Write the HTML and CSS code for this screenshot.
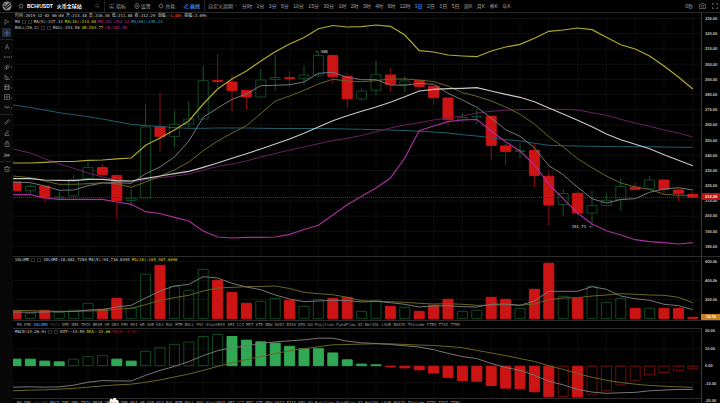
FILE: index.html
```html
<!DOCTYPE html>
<html lang="zh-CN">
<head>
    <meta charset="UTF-8">
    <meta name="viewport" content="width=device-width, initial-scale=1.0">
    <title>BCH/USDT 火币全球站</title>
    <link rel="stylesheet" href="styles.css">
</head>
<body>

    <header class="topbar">
        <a class="logo" href="#" aria-label="Home">
            <svg viewBox="0 0 10 10"><circle cx="5" cy="5" r="4.6" fill="#8d8d8d"/><path d="M1.4 4.6L3 6.2L7.8 2.2M3.4 8L8.6 4.2M2 3.2L3.6 3" stroke="#111" stroke-width="1.1" fill="none"/></svg>
        </a>
        <div class="symbol">
            <svg class="icon" viewBox="0 0 12 12"><path d="M6 1l1.5 3.4 3.6.3-2.8 2.4.9 3.6L6 8.8l-3.2 1.9.9-3.6L.9 4.7l3.6-.3z"/></svg>
            <h1><span>BCH/USDT</span><span>火币全球站</span></h1>
            <svg class="icon search" viewBox="0 0 12 12"><circle cx="5" cy="5" r="3.6"/><path d="M8 8l3 3"/></svg>
        </div>
        <div class="tools">
            <button><svg class="icon" viewBox="0 0 12 12"><path d="M1 5l3-3 3 2 4-3M1 10h10M2 7v3M5 6v4M8 7v3"/></svg>指标</button>
            <button><svg class="icon" viewBox="0 0 12 12"><path d="M4 1h4l3 5-3 5H4L1 6z"/><circle cx="6" cy="6" r="2"/></svg>设置</button>
            <button><svg class="icon" viewBox="0 0 12 12"><circle cx="6" cy="6" r="3.4"/><path d="M6 0v1.5M6 10.500v1.500M0 6h1.500M10.500 6H12M1.600 1.600l1 1M9.400 9.400l1 1M1.600 10.400l1-1M9.400 2.600l1-1"/></svg>亮色</button>
            <button class="active"><svg class="icon" viewBox="0 0 12 12"><path d="M2 8l6-6 2 2-6 6H2zM6 11h5"/></svg>画线</button>
        </div>
        <button class="custom">自定义周期 <span class="caret"></span></button>
        <nav class="periods" id="periods"></nav>
        <div class="right">
            <span>0秒</span>
            <button aria-label="Screenshot"><svg class="icon wide" viewBox="0 0 14 12"><path d="M1 3h3l1-2h4l1 2h3v8H1z"/><circle cx="7" cy="6.500" r="2.300"/></svg></button>
            <button aria-label="Fullscreen"><svg class="icon" viewBox="0 0 12 12"><path d="M1 4V1h3M8 1h3v3M11 8v3H8M4 11H1V8"/></svg></button>
        </div>
    </header>

    <main class="workspace">
        <aside class="sidebar">
            <div class="group">
                <button aria-label="Cursor"><svg class="icon" viewBox="0 0 12 12"><path d="M2 1l8 5-5 1-3 4z"/></svg></button>
                <button class="selected" aria-label="Crosshair"><svg class="icon" viewBox="0 0 12 12"><path d="M6 0v12M0 6h12"/></svg></button>
            </div>
            <div class="group spread">
                <button aria-label="Text"><svg class="icon" viewBox="0 0 12 12"><path d="M2 11L6 1l4 10M3.500 7.500h5"/></svg></button>
                <button class="more" aria-label="Line"><svg class="icon" viewBox="0 0 12 12"><path d="M0 6h12M1 5v2M11 5v2"/></svg></button>
                <button class="more" aria-label="Channel"><svg class="icon" viewBox="0 0 12 12"><path d="M0 8l9-7M1 11l10-8M4 11l8-6M5 2v8"/></svg></button>
                <button class="more" aria-label="Triangle"><svg class="icon" viewBox="0 0 12 12"><path d="M2 1v10h9zM2 5c3 0 5 2 5 6"/></svg></button>
                <button class="more" aria-label="Fibonacci"><svg class="icon" viewBox="0 0 12 12"><path d="M0 2h12M0 5h12M0 8h12M0 11h12M3 2v9M9 2v9"/></svg></button>
                <button class="more" aria-label="Grid"><svg class="icon" viewBox="0 0 12 12"><path d="M1 1h10v10H1zM6 1v10M1 6h10"/></svg></button>
                <button class="more" aria-label="Wave"><svg class="icon" viewBox="0 0 12 12"><path d="M0 3l3 5 2-4 2 5 2-4 3 4"/></svg></button>
            </div>
            <div class="group">
                <button aria-label="Ruler"><svg class="icon" viewBox="0 0 12 12"><path d="M1 9l8-8 2 2-8 8zM4 6l1 1M6 4l1 1"/></svg></button>
                <button aria-label="Pencil"><svg class="icon" viewBox="0 0 12 12"><path d="M2 8l5-7 2 2-5 6-2 1zM1 11h10M7 8l3 1"/></svg></button>
                <button aria-label="Lock"><svg class="icon" viewBox="0 0 12 12"><path d="M2 4h8v7H2zM4 4V1h4v3M6 6v3"/></svg></button>
                <button aria-label="Hide"><svg class="icon" viewBox="0 0 12 12"><path d="M0 4h4L0 9h4l2-5v5l3-5v5l3-5M0 7h12"/></svg></button>
            </div>
            <div class="group">
                <button aria-label="Delete"><svg class="icon" viewBox="0 0 12 12"><path d="M0 3h12M2 3v8h8V3M4 3V1h4v2M4.500 6v3M7.500 6v3"/></svg></button>
            </div>
        </aside>

        <div class="charts">
            <section class="pane price-pane">
                <svg class="plot" id="price" viewBox="0 13 688 243" preserveAspectRatio="none"></svg>
                <div class="legend">
                    <p><span>时间:2019-12-02 00:00</span><span>开:214.48</span><span>高:216.30</span><span>低:211.88</span><span>收:212.29</span><span>涨幅:<b class="red">-1.00%</b></span><span>振幅:2.09%</span></p>
                    <p><span>MA</span><i></i><i></i><span>MA(5):217.13</span><span class="yellow">MA(10):214.00</span><span class="purple">MA(30):252.12</span><span class="cyan">MA(60):245.14</span></p>
                    <p><span>BOLL(20,2)</span><i></i><i></i><span>BOLL:233.56</span><span class="yellow">UB:283.77</span><span class="purple">LB:182.55</span></p>
                </div>
                <span class="mark high">← 308</span>
                <span class="mark low">191.71 →</span>
            </section>
            <div class="axis price-axis" id="price-axis">
                <strong class="tag last">212.29</strong>
            </div>

            <section class="pane volume-pane">
                <svg class="plot" id="volume" viewBox="0 257 688 63" preserveAspectRatio="none"></svg>
                <div class="legend">
                    <p><span>VOLUME</span><i></i><i></i><span>VOLUME:18,682.7289</span><span>MA(5):94,710.0394</span><span class="yellow">MA(10):165,967.6096</span></p>
                </div>
            </section>
            <div class="axis volume-axis" id="volume-axis">
                <strong class="tag amount">18.7k</strong>
            </div>

            <nav class="tabs volume-tabs" data-active="VOLUME" data-used="MACD"></nav>

            <section class="pane macd-pane">
                <svg class="plot" id="macd" viewBox="0 328 688 70" preserveAspectRatio="none"></svg>
                <div class="legend">
                    <p><span>MACD(12,26,9)</span><i></i><i></i><span>DIF:-13.59</span><span class="yellow">DEA:-12.66</span><span class="dark-red">MACD:-1.87</span></p>
                </div>
            </section>
            <div class="axis macd-axis" id="macd-axis"></div>

            <nav class="tabs macd-tabs" data-active="MACD" data-used="VOLUME"></nav>
        </div>
    </main>

    <svg class="mascot" viewBox="0 0 14 12" preserveAspectRatio="xMidYMin slice"><path d="M1 12C-1 9 1 6 3 6C2 2 5 1 6 3C7 0 10 0 10 3C13 3 13 6 12 7C14 8 14 10 13 12Z" fill="#fff"/><circle cx="5" cy="6" r="1" fill="#f0a0a4"/><circle cx="9" cy="6" r="1" fill="#f0a0a4"/></svg>

    <script src="chart.js"></script>
</body>
</html>
```
FILE: styles.css
```css
* {
    box-sizing: border-box;
}

html {
    overflow: hidden;
}

body {
    margin: 0;
    height: 100vh;
    overflow: hidden;
    background-color: #000;
    color: #a8a8a8;
    font-family: "Liberation Sans", "Noto Sans CJK SC", sans-serif;
    font-size: 5px;
    line-height: 6px;
}

button {
    padding: 0;
    border: 0;
    background: none;
    color: inherit;
    font: inherit;
    cursor: pointer;
    white-space: nowrap;
}

/* Icons */
.icon {
    flex: none;
    width: 6px;
    height: 6px;
    fill: none;
    stroke: currentColor;
    stroke-width: 1.3;
}

.icon.wide {
    width: 7px;
}

/* Top bar */
.topbar {
    display: flex;
    align-items: center;
    height: 13px;
    border-bottom: 1px solid #292929;
    color: #a4a4a4;
    white-space: nowrap;
}

.topbar .icon {
    color: #808080;
}

.logo {
    width: 13px;
    height: 10px;
    text-align: center;
}

.logo svg {
    width: 10px;
    height: 10px;
}

.symbol {
    display: flex;
    align-items: center;
    gap: 3px;
    width: 92px;
    height: 12px;
    padding: 0 4px 0 5px;
    border-right: 1px solid #222;
}

.symbol h1 {
    display: flex;
    gap: 4px;
    margin: 0;
    color: #fff;
    font-size: 5px;
    font-weight: bold;
}

.symbol .search {
    width: 5px;
    margin-left: auto;
    color: #666;
}

.tools {
    display: flex;
    align-items: center;
    justify-content: space-between;
    width: 100px;
    height: 12px;
    padding: 0 4px;
    border-right: 1px solid #222;
}

.tools button {
    display: flex;
    align-items: center;
    gap: 1px;
}

.tools .active,
.tools .active .icon,
.periods .active {
    color: #3b82e8;
    font-weight: bold;
}

.custom {
    display: flex;
    align-items: center;
    gap: 2px;
    margin: 0 5px 0 3px;
}

.caret {
    border: 1px solid transparent;
    border-top-color: #777;
}

.periods {
    display: flex;
    flex: 0 1 269px;
    justify-content: space-between;
}

.right {
    display: flex;
    align-items: center;
    gap: 6px;
    margin-left: auto;
    padding-right: 2px;
}

.right button,
.sidebar button {
    display: flex;
    align-items: center;
    justify-content: center;
}

/* Drawing tools */
.workspace {
    display: flex;
    height: calc(100vh - 9px);
}

.sidebar {
    flex: none;
    width: 13px;
    padding-top: 2px;
    background-color: #080808;
    color: #757575;
}

.group {
    display: flex;
    flex-direction: column;
    align-items: center;
    gap: 2px;
    padding: 2px 0;
    border-bottom: 1px solid #222;
}

.group:last-child {
    border-bottom: 0;
}

.group.spread {
    justify-content: space-between;
    gap: 0;
    height: 75px;
}

.sidebar button {
    position: relative;
    width: 9px;
    height: 9px;
    border-radius: 1px;
}

.sidebar .selected {
    background-color: #262b38;
    color: #4a7fd0;
}

.sidebar .more::after {
    content: "";
    position: absolute;
    right: -1px;
    top: 4px;
    border: 1px solid transparent;
    border-left-color: #777;
    border-right: 0;
}

/* Chart grid: plots on the left, scales on the right */
.charts {
    flex: 1;
    min-width: 0;
    display: grid;
    grid-template-columns: minmax(0, 1fr) 19px;
    grid-template-rows: minmax(0, 244fr) minmax(0, 64fr) 7px minmax(0, 71fr) 8px;
}

.pane {
    position: relative;
    grid-column: 1;
    min-height: 0;
    border-bottom: 1px solid #2c2c2c;
}

.axis {
    grid-column: 2;
}

.price-pane,
.price-axis {
    grid-row: 1;
}

.volume-pane,
.volume-axis {
    grid-row: 2;
}

.volume-tabs {
    grid-row: 3;
}

.macd-pane {
    grid-row: 4;
    border-top: 1px solid #2c2c2c;
}

.macd-tabs {
    grid-row: 5;
}

.plot {
    display: block;
    width: 100%;
    height: 100%;
}

.plot * {
    vector-effect: non-scaling-stroke;
}

.legend {
    position: absolute;
    top: 0;
    left: 2px;
    color: #d8d8d8;
    font-family: "DejaVu Sans Mono", "Noto Sans CJK SC", monospace;
    font-size: 4px;
    white-space: nowrap;
}

.legend p {
    display: flex;
    align-items: center;
    gap: 2px;
    height: 6px;
    margin: 0;
}

.legend i {
    width: 4px;
    height: 4px;
    border: 1px solid #2e2e2e;
}

.legend .yellow {
    color: #ddd62e;
}

.legend .purple {
    color: #b838a8;
}

.legend .cyan {
    color: #33adc4;
}

.legend .red {
    color: #e0392b;
}

.legend .dark-red {
    color: #96191a;
}

.mark {
    position: absolute;
    color: #e0e0e0;
    font-family: "DejaVu Sans Mono", monospace;
    font-size: 4px;
}

.mark.high {
    top: 15%;
    left: 44%;
}

.mark.low {
    top: 87%;
    right: 16%;
}

/* Scales */
.axis {
    position: relative;
    display: flex;
    flex-direction: column;
    justify-content: space-between;
    min-height: 0;
    padding-left: 3px;
    border-left: 1px solid #3a3a3a;
    border-bottom: 1px solid #2c2c2c;
    color: #c4c4c4;
    font-size: 4px;
    font-weight: bold;
    line-height: 5px;
}

.price-axis {
    padding-top: 3px;
    padding-bottom: 7px;
}

.volume-axis {
    padding-top: 2px;
    padding-bottom: 18px;
}

/* The lowest MACD label sits beside the tabs */
.macd-axis {
    grid-row: 4 / 6;
    padding-bottom: 4px;
    border-bottom: 0;
}

.tag {
    position: absolute;
    left: 0;
    right: 0;
    padding-left: 3px;
    color: #fff;
}

.tag.last {
    top: 74%;
    background-color: #b81414;
    line-height: 7px;
}

.tag.amount {
    bottom: 0;
    left: -1px;
    padding-left: 5px;
    background-color: #c8801c;
    line-height: 6px;
}

/* Indicator tabs */
.tabs {
    grid-column: 1;
    display: flex;
    justify-content: space-between;
    width: 65%;
    padding-left: 4px;
    color: #9c9c9c;
    font-family: "DejaVu Sans Mono", monospace;
    font-size: 4px;
}

.tabs button {
    line-height: 6px;
}

.tabs .active {
    color: #3b82e8;
    font-weight: bold;
}

.tabs .used {
    color: #3c3c3c;
}

.mascot {
    position: absolute;
    bottom: 0;
    left: 107px;
    width: 13px;
    height: 6px;
}
```
FILE: chart.js
```js
const STEP = 14.4;
const FIRST = 3;
const BAR = 10.6;

const RED = '#cc1414';
const GREEN = '#30a854';
const HOLLOW_GREEN = '#114a26';
const HOLLOW_RED = '#6d0d0d';

// [body top, body bottom, wick top, wick bottom, 1 = up]
const candles = [
    [181.7, 191, 181.7, 191, 0], [186.3, 190.7, 184.7, 194, 1], [186, 198, 186, 202.7, 0], [196.7, 198.3, 191.7, 200.3, 1],
    [179.3, 196.3, 175.3, 199, 1], [167.3, 178.7, 162, 180.7, 1], [167.3, 174.7, 164.3, 174.7, 0], [175.3, 200.7, 174, 218.7, 0],
    [198, 200.7, 189, 206.7, 1], [126.7, 198.3, 104.3, 198.3, 1], [126.3, 136.7, 92.3, 152.3, 0], [124.3, 136.7, 111, 146.7, 1],
    [118.7, 124.3, 101, 127.3, 1], [80.3, 119.3, 66, 119.3, 1], [80.3, 81.7, 54, 88.7, 0], [81.7, 90.7, 75, 111, 0],
    [90.3, 97.3, 90.3, 109.3, 0], [79.7, 97.3, 69, 97.3, 1], [77.3, 79.7, 55, 90.7, 1], [77.3, 78.7, 71.3, 86.7, 0],
    [74.7, 78.7, 66, 84.7, 1], [55.3, 75.3, 52, 77.3, 1], [55.3, 76.7, 54, 84, 0], [76.3, 99, 72.7, 107.7, 0],
    [90.7, 99.3, 88.3, 100.7, 1], [74.3, 90.7, 60.7, 95.3, 1], [74.7, 84.7, 68.7, 91.7, 0], [80.7, 84.7, 76.3, 92.3, 1],
    [80.3, 86.7, 80.3, 90.7, 0], [86, 98, 86, 104.7, 0], [97.7, 120, 97.7, 125.3, 0], [117.3, 120, 113, 122.3, 1],
    [116, 117, 109.3, 124, 1], [116, 145.7, 116, 160, 0], [145.7, 151.7, 143.3, 165, 0], [150.3, 151.7, 143, 158.3, 1],
    [150, 175.7, 144.3, 187, 0], [176, 205.3, 170.7, 225.3, 0], [193.3, 204.7, 189, 215.7, 1], [193, 213.3, 191, 215.3, 0],
    [205.3, 213.3, 190.7, 228.3, 1], [200, 205.7, 193, 205.7, 1], [186.3, 199.7, 178, 210.7, 1], [187, 189.7, 182.3, 189.7, 0],
    [179.7, 189.3, 176, 189.3, 1], [179.7, 189.7, 179.7, 193, 0], [189.7, 194, 188.3, 201.7, 0], [194.3, 197.7, 191.7, 197.7, 0]
];

const volumeTops = [311, 313, 310, 312, 310, 303, 309, 298, 308, 274, 265, 286, 290, 269, 280, 292, 303, 301, 298, 300, 306, 299, 298, 297,
    311, 300, 306, 307, 311, 305, 299, 311, 310, 297, 299, 308, 289, 263, 296, 298, 286, 302, 298, 308, 308, 308, 308, 317];

const macdEnds = [358.3, 358.3, 360.3, 361, 358.3, 355.7, 354.7, 358.3, 360.3, 350.3, 346.7, 343.3, 341, 335.3, 333.3, 335.3,
    339, 340.7, 342, 345.3, 347.7, 347.7, 352, 359, 363.3, 364, 366.5, 367.7, 369.7, 373, 377.7, 380.7,
    381.3, 385.7, 388.3, 389, 392, 397, 396.7, 397.3, 395, 391, 385, 380.3, 374.7, 372.3, 370.3, 368.7];
const macdHollow = [4, 5, 6, 9, 10, 11, 12, 13, 14, 38, 40, 41, 42, 43, 44, 45, 46, 47];

const priceLines = [
    // MA60
    ['#1f5f70', 1, [105, 107.5, 110, 112.7, 114.7, 116.7, 119, 121.7, 124.3, 125.7, 126.5, 127.7, 128.3, 128.3, 128, 128, 128, 128.3, 128.5, 128.5, 128.5, 128.5, 128.7, 129,
        129.3, 129.7, 130, 130.5, 131.3, 132, 133, 134.7, 136, 137.7, 139.7, 141, 143.3, 145.3, 145.7, 146, 146.3, 146.5, 146.7, 146.7, 146.8, 147, 147.2, 147.3]],
    // MA30
    ['#68215f', 1, [149, 153, 158.7, 164, 168.3, 173, 177, 180, 182, 179.7, 177.7, 176, 174, 170, 166.5, 164, 161, 157, 153.5, 150, 147, 143.7, 140.7, 138.3,
        135.5, 131.7, 128, 125, 122.7, 120, 118, 116, 113, 111.3, 110.3, 109.7, 109.3, 109.3, 109.3, 110, 112.7, 115.3, 119.3, 123, 126.3, 130, 133, 137]],
    // MA10
    ['#6a661f', 1, [176, 177.7, 181, 184.3, 184.3, 183.7, 182.7, 184, 187.3, 182, 176, 170, 162, 150.7, 141, 133, 125.7, 113.7, 101, 96, 90.3, 84, 79.3, 81,
        81.7, 80.7, 79, 79, 80, 81.7, 86, 92.7, 96.3, 101, 107, 114.3, 124, 136.7, 147, 158.7, 167.7, 176, 183, 187, 189.3, 194.3, 195.3, 195.3]],
    // MA5
    ['#777777', 1, [182, 182.7, 186, 190.3, 190, 185.7, 183, 182.7, 183.3, 173.7, 167, 157, 141, 117.3, 108, 99.3, 94, 85.7, 85.3, 84.7, 82, 73.3, 72.3, 77.3,
        79.7, 79.7, 85, 85.3, 83.3, 84.3, 93.3, 100, 107.3, 118, 129.7, 136.3, 147.7, 165.7, 174.7, 187.3, 198.7, 203, 199.5, 198.7, 192.3, 189, 187.7, 190]],
    // BOLL middle, upper and lower bands
    ['#c8c8c8', 1.2, [178.7, 178.7, 180, 180.3, 180.7, 179.3, 179.3, 180.7, 181, 178.3, 176, 173.7, 171.3, 167.3, 163, 158.3, 153.7, 149, 144, 139, 133.3, 127, 120.7, 115.7,
        111.3, 107, 102.3, 96.7, 91, 89.3, 88.7, 88.3, 87.7, 91, 94.3, 97.3, 101.7, 108, 114, 120.3, 126.7, 134, 139.7, 144.3, 148.7, 154.7, 160.3, 165.7]],
    ['#b0ab2a', 1.2, [163, 163, 162.3, 161.5, 161.5, 160.3, 160, 158.9, 158, 145.3, 138, 130, 121, 104, 89, 79, 71, 61, 51.7, 44, 37.5, 28.7, 25.5, 27,
        26.7, 25, 26.3, 35, 50.7, 52, 55, 56, 56.7, 51, 47, 44.3, 38.3, 31.3, 30, 28, 29.7, 37.3, 44.7, 49, 56, 66, 77, 89]],
    ['#a82f9c', 1.2, [194.7, 194.7, 198, 199.3, 199.3, 199.3, 199.3, 202, 204.3, 211.7, 213.5, 217.3, 221, 231, 237, 238, 237.3, 237.3, 237, 234.3, 229.5, 225.3, 215, 204.7,
        196.3, 188, 178, 158, 130.7, 126, 121.7, 120, 119.3, 131, 141.7, 151, 165, 184, 198.7, 213, 224, 230.7, 235, 239.7, 241.7, 242.7, 244, 242.7]]
];

const volumeLines = [
    ['#6a661f', 1, [310.3, 310.7, 311, 311.3, 311.3, 311, 310.7, 309.3, 308.3, 304.7, 300.3, 297.7, 295.3, 291, 288, 287.3, 286.7, 286.5, 286, 288.5, 292.3, 293.7, 294.7, 297.3,
        300.7, 301.3, 301.7, 302.3, 303.3, 304, 303.7, 304.3, 305.3, 305.3, 304.7, 305.3, 304, 299.7, 298, 297.7, 296, 295, 293.7, 294.3, 295, 295.3, 297.3, 302.7]],
    ['#777777', 1, [312, 312.3, 312, 311.7, 311.5, 310, 309.5, 307, 305.3, 298, 291, 286, 284.3, 276.7, 278, 283.3, 287, 289.7, 295, 299, 301.7, 301, 300.3, 300.5,
        302, 301.3, 302.7, 304.3, 307, 306, 305.7, 306.7, 307, 304.3, 304, 305.3, 301, 291.3, 291.3, 291.3, 286.7, 289.3, 296, 298.7, 300.3, 304.3, 305.7, 309.7]]
];

const macdLines = [
    ['#6a661f', 1, [390.7, 390, 389.7, 389, 388.3, 387, 385.7, 384.7, 384, 382, 379.7, 376.7, 373.7, 370, 366, 362.3, 359, 356, 353, 350, 348, 346, 344, 343.7,
        343.3, 343, 343, 343.7, 344.3, 344.7, 345.7, 347, 349.7, 352.3, 355, 358, 361, 365.3, 369, 373.3, 377, 380, 382.3, 384, 385.3, 386, 386.7, 387.3]],
    ['#777777', 1, [387, 386.7, 387, 386.7, 385, 382, 380.3, 380.7, 380.7, 375, 370, 366, 361, 355, 350, 347, 345.3, 342.7, 341, 340, 339, 337.3, 337.3, 340.3,
        342, 342.7, 343.7, 345, 346.3, 349, 352.7, 356, 358, 363, 367, 370, 375, 381, 384.7, 389.3, 392, 393.3, 392.7, 392.3, 390.7, 390, 389.3, 389.3]]
];

const center = i => FIRST + i * STEP;

function add(svg, tag, attrs) {
    const el = document.createElementNS('http://www.w3.org/2000/svg', tag);
    for (const key in attrs) el.setAttribute(key, attrs[key]);
    svg.appendChild(el);
}

function line(svg, x1, y1, x2, y2, stroke, dash) {
    add(svg, 'line', { x1, y1, x2, y2, stroke, 'stroke-dasharray': dash || 'none' });
}

function bar(svg, i, top, bottom, fill, stroke) {
    add(svg, 'rect', {
        x: center(i) - BAR / 2 + 0.3,
        y: top + 0.3,
        width: BAR - 0.6,
        height: Math.max(bottom - top - 0.6, 0.6),
        fill,
        stroke
    });
}

function grid(svg, top, bottom, rows) {
    for (let i = 3; i < candles.length; i += 2) line(svg, center(i), top, center(i), bottom, '#0d0d0d');
    rows.forEach(y => line(svg, 0, y, 688, y, '#101010'));
}

function curves(svg, list) {
    list.forEach(([stroke, width, ys]) => {
        const points = ys.map((y, i) => `${i ? center(i) : 0},${y}`).join(' ');
        add(svg, 'polyline', { points, stroke, 'stroke-width': width, fill: 'none' });
    });
}

function drawPrice() {
    const svg = document.getElementById('price');
    grid(svg, 13, 256, Array.from({ length: 16 }, (_, i) => 18.5 + i * 15.2));
    candles.forEach(([top, bottom, high, low, up], i) => {
        const wick = up ? '#115a2c' : '#8a0f0f';
        line(svg, center(i), high, center(i), top, wick);
        line(svg, center(i), bottom, center(i), low, wick);
        bar(svg, i, top, bottom, up ? 'none' : RED, up ? HOLLOW_GREEN : RED);
    });
    line(svg, 0, 197.5, 688, 197.5, '#8a1414', '1 1');
    curves(svg, priceLines);
}

function drawVolume() {
    const svg = document.getElementById('volume');
    grid(svg, 257, 320, [261.5, 280.5, 299.5]);
    volumeTops.forEach((top, i) => {
        const up = candles[i][4];
        bar(svg, i, top, 319, up ? 'none' : RED, up ? HOLLOW_GREEN : RED);
    });
    curves(svg, volumeLines);
}

function drawMacd() {
    const svg = document.getElementById('macd');
    grid(svg, 328, 398, [330.5, 348, 365.5, 382.5]);
    macdEnds.forEach((end, i) => {
        const up = end < 365.5;
        const hollow = macdHollow.includes(i);
        const solid = up ? GREEN : RED;
        const edge = up ? HOLLOW_GREEN : HOLLOW_RED;
        bar(svg, i, Math.min(end, 365.5), Math.max(end, 365.5), hollow ? 'none' : solid, hollow ? edge : solid);
    });
    curves(svg, macdLines);
}

function fillAxis(id, labels) {
    const axis = document.getElementById(id);
    labels.forEach(text => {
        const span = document.createElement('span');
        span.textContent = text;
        axis.appendChild(span);
    });
}

function fillButtons(nav, labels, classOf) {
    labels.forEach(text => {
        const button = document.createElement('button');
        button.textContent = text;
        button.className = classOf(text);
        nav.appendChild(button);
    });
}

drawPrice();
drawVolume();
drawMacd();

fillAxis('price-axis', Array.from({ length: 16 }, (_, i) => (330 - i * 10).toFixed(2)));
fillAxis('volume-axis', ['600.0k', '400.0k', '200.0k']);
fillAxis('macd-axis', ['20.00', '10.00', '0.00', '-10.00', '-20.00']);

const periods = '分时 1分 3分 5分 10分 15分 30分 1时 2时 3时 4时 6时 12时 1日 2日 3日 5日 周K 月K 季K 年K'.split(' ');
fillButtons(document.getElementById('periods'), periods, text => text === '1日' ? 'active' : '');

const indicators = ('MA EMA VOLUME MACD DMI DMA TRIX BRAR VR OBV EMV RSI WR SAR KDJ ROC MTM BOLL PSY StochRSI SMI CCI MFI ATR BBW ' +
    'SKDJ BIAS DPO AO Position FundFlow AI-NetVOL LSUR BASIS TVolume FTBS TTSI TTMU').split(' ');
document.querySelectorAll('.tabs').forEach(nav => {
    fillButtons(nav, indicators, text => {
        if (text === nav.dataset.active) return 'active';
        return text === nav.dataset.used ? 'used' : '';
    });
});
```
